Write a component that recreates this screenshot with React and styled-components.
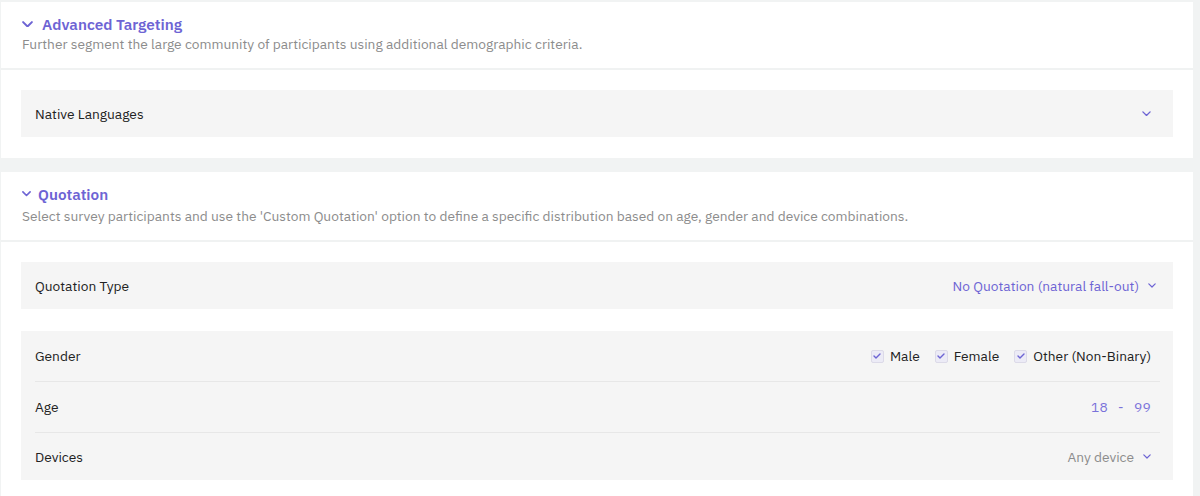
import React from "react";
import styled, { createGlobalStyle } from "styled-components";

const Global = createGlobalStyle`
  html, body { margin: 0; padding: 0; background: #f1f3f3; }
  body { font-family: "IBM Plex Sans", Inter, "Noto Sans", sans-serif; color: #222; }
`;

const Page = styled.div`
  padding: 2px 7px 0 1px;
  display: flex;
  flex-direction: column;
  gap: 14px;
`;

const Card = styled.section`
  background: #fff;
`;

const CardHeader = styled.header`
  padding: 13px 21px 15px;
  border-bottom: 2px solid #f0f2f2;
  display: flex;
  flex-direction: column;
  gap: ${(p) => p.$gap}px;
`;

const TitleRow = styled.div`
  display: flex;
  align-items: center;
  gap: ${(p) => p.$gap || 8}px;
  color: #6d64d4;
  font-size: 15.3px;
  font-weight: 600;
  line-height: 18px;
`;

const Desc = styled.p`
  margin: 0;
  font-size: 13.75px;
  line-height: 18px;
  color: #8c8c8c;
`;

const CardBody = styled.div`
  padding: 20px 20px 21px 20px;
  display: flex;
  flex-direction: column;
  gap: 22px;
`;

const Row = styled.div`
  background: #f5f5f5;
  height: 47px;
  padding: 0 ${(p) => p.$pr}px 0 14px;
  display: flex;
  align-items: center;
  justify-content: space-between;
  font-size: 13.75px;
`;

const Group = styled.div`
  background: #f5f5f5;
  padding: 0 22px 0 14px;
  display: flex;
  flex-direction: column;
`;

const GroupRow = styled.div`
  height: ${(p) => p.$h}px;
  display: flex;
  align-items: center;
  justify-content: space-between;
  font-size: 13.75px;
  border-bottom: ${(p) => (p.$last ? "none" : "1px solid #e7e7e7")};
  margin-right: ${(p) => (p.$last ? 0 : -9)}px;
  padding-right: ${(p) => (p.$last ? 0 : 9)}px;
`;

const Label = styled.span`
  color: #222;
`;

const Value = styled.span`
  display: flex;
  align-items: center;
  gap: 9px;
  color: ${(p) => p.$color || "#6d64d4"};
`;

const Checks = styled.div`
  display: flex;
  align-items: center;
  gap: 15px;
`;

const Check = styled.label`
  display: flex;
  align-items: center;
  gap: 6px;
  color: #222;
`;

const Box = styled.span`
  width: 11px;
  height: 11px;
  border: 1px solid #dcdae8;
  background: #ecebf6;
  border-radius: 2px;
  display: inline-flex;
  align-items: center;
  justify-content: center;
`;

const Range = styled.span`
  display: flex;
  gap: 10px;
  color: #7a72da;
  letter-spacing: 0.3px;
`;

const Chevron = ({ size = 9, color = "#6d64d4", sw = 1.5 }) => (
  <svg width={size} height={size * 0.6} viewBox="0 0 10 6" fill="none">
    <polyline points="1,1 5,5 9,1" stroke={color} strokeWidth={sw} strokeLinecap="round" strokeLinejoin="round" />
  </svg>
);

const Tick = () => (
  <svg width="8" height="6" viewBox="0 0 8 6" fill="none">
    <polyline points="1,3 3,5 7,1" stroke="#6d64d4" strokeWidth="1.4" strokeLinecap="round" strokeLinejoin="round" />
  </svg>
);

export default function App() {
  return (
    <>
      <Global />
      <Page>
        <Card>
          <CardHeader $gap={2}>
            <TitleRow $gap={9}>
              <Chevron size={11} sw={1.8} />
              Advanced Targeting
            </TitleRow>
            <Desc>Further segment the large community of participants using additional demographic criteria.</Desc>
          </CardHeader>
          <CardBody>
            <Row $pr={22}>
              <Label>Native Languages</Label>
              <Value>
                <Chevron />
              </Value>
            </Row>
          </CardBody>
        </Card>
        <Card>
          <CardHeader $gap={4}>
            <TitleRow $gap={7}>
              <Chevron size={9} sw={1.8} />
              Quotation
            </TitleRow>
            <Desc>
              Select survey participants and use the 'Custom Quotation' option to define a specific distribution based on age, gender and device combinations.
            </Desc>
          </CardHeader>
          <CardBody>
            <Row $pr={17}>
              <Label>Quotation Type</Label>
              <Value>
                No Quotation (natural fall-out)
                <Chevron size={8} />
              </Value>
            </Row>
            <Group>
              <GroupRow $h={50}>
                <Label>Gender</Label>
                <Checks>
                  <Check><Box><Tick /></Box>Male</Check>
                  <Check><Box><Tick /></Box>Female</Check>
                  <Check><Box><Tick /></Box>Other (Non-Binary)</Check>
                </Checks>
              </GroupRow>
              <GroupRow $h={50}>
                <Label>Age</Label>
                <Range><span>18</span><span>-</span><span>99</span></Range>
              </GroupRow>
              <GroupRow $h={47} $last>
                <Label>Devices</Label>
                <Value $color="#8c8c8c">
                  Any device
                  <Chevron size={8} />
                </Value>
              </GroupRow>
            </Group>
          </CardBody>
        </Card>
      </Page>
    </>
  );
}
